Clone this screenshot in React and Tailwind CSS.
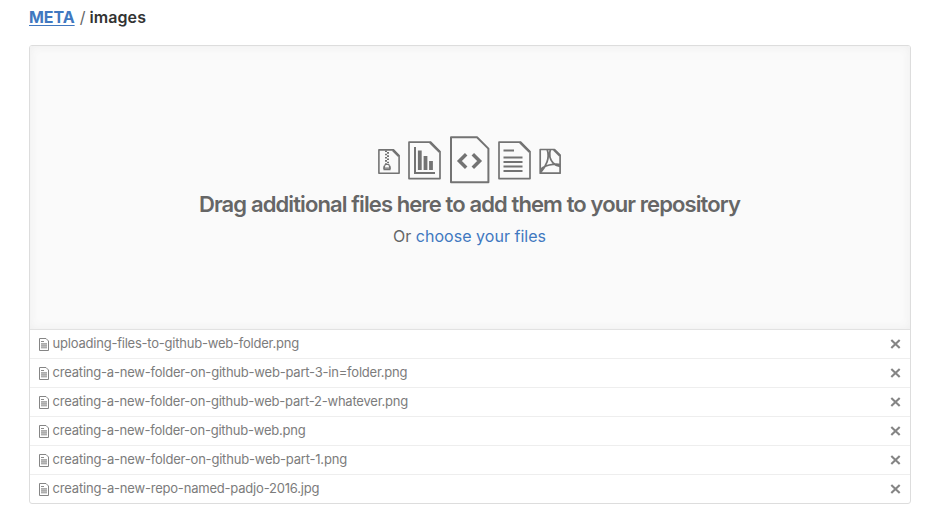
import React from 'react';

const files = [
  { name: 'uploading-files-to-github-web-folder.png', spacing: 'tracking-[-0.22px]' },
  { name: 'creating-a-new-folder-on-github-web-part-3-in=folder.png', spacing: 'tracking-[-0.21px]' },
  { name: 'creating-a-new-folder-on-github-web-part-2-whatever.png', spacing: 'tracking-[-0.22px]' },
  { name: 'creating-a-new-folder-on-github-web.png', spacing: 'tracking-[-0.23px]' },
  { name: 'creating-a-new-folder-on-github-web-part-1.png', spacing: 'tracking-[-0.2px]' },
  { name: 'creating-a-new-repo-named-padjo-2016.jpg', spacing: 'tracking-[-0.2px]' },
];

function ZipIcon() {
  return (
    <svg width="22" height="48" viewBox="0 0 22 48" fill="none" stroke="#737373" strokeWidth="1.6">
      <path d="M0.9 13.9H15.5L21.1 19.5V37.2H0.9Z" strokeLinejoin="round" />
      <path d="M14.8 14.2L20.8 20.2" strokeWidth="2" />
      <path d="M8 14.5v14" strokeWidth="2" strokeDasharray="1.6 1.6" />
      <path d="M10 16.1v12.4" strokeWidth="2" strokeDasharray="1.6 1.6" />
      <path d="M7.2 28.5h3.6l1.3 3.6H5.9Z" strokeWidth="1.2" />
      <path d="M6.1 29.8v3.8h5.8v-3.8" strokeWidth="1.3" />
    </svg>
  );
}

function ChartIcon() {
  return (
    <svg width="33" height="48" viewBox="0 0 33 48" fill="none" stroke="#737373" strokeWidth="1.7">
      <path d="M1 6.2H22.6L32 15.6V42.6H1Z" strokeLinejoin="round" />
      <path d="M22 6.4L31.6 16" strokeWidth="2.2" />
      <path d="M7 11V37H27" strokeWidth="2" />
      <path d="M11.8 14.5V34M17.5 20V34M23 25V34" strokeWidth="3.8" />
    </svg>
  );
}

function CodeIcon() {
  return (
    <svg width="40" height="48" viewBox="0 0 40 48" fill="none" stroke="#737373" strokeWidth="2">
      <path d="M1 1.2H27L38.4 12.6V46.2H1Z" strokeLinejoin="round" />
      <path d="M16.2 18.2L9.4 25L16.2 31.8M22.8 18.2L29.6 25L22.8 31.8" strokeWidth="3.5" />
    </svg>
  );
}

function TextIcon() {
  return (
    <svg width="33" height="48" viewBox="0 0 33 48" fill="none" stroke="#737373" strokeWidth="1.7">
      <path d="M1 6.2H22.6L32 15.6V42.6H1Z" strokeLinejoin="round" />
      <path d="M22 6.4L31.6 16" strokeWidth="2.2" />
      <path d="M5.5 14.5H16M5.5 21.5H24.5M5.5 26H24.5M5.5 30.5H24.5M5.5 35H24.5" strokeWidth="1.8" />
    </svg>
  );
}

function PdfIcon() {
  return (
    <svg width="22" height="48" viewBox="0 0 22 48" fill="none" stroke="#737373" strokeWidth="1.7">
      <path d="M1.2 13.5H15.5L21.1 19.1V37.2H1.2Z" strokeLinejoin="round" />
      <path d="M14.8 13.7L20.8 19.7" strokeWidth="2" />
      <path d="M8.3 13.8C9.6 18 9.5 22 8 26C6.3 30.5 4 34 1.5 36.5M11.3 13.8C9.8 19 11 23.5 14 26.8C16 29 18.5 30 21 30.3M1.5 33.3C5 30.2 9.5 28.8 14 28.3C17 28 19.5 28.1 21 28.6" strokeWidth="1.8" />
    </svg>
  );
}

function FileIcon() {
  return (
    <svg width="10" height="13" viewBox="0 0 10 13" fill="none">
      <path d="M0.5 0.5H7L9.5 3V12.5H0.5Z" stroke="#858585" />
      <path d="M2 3.5H5" stroke="#8c8c8c" />
      <path d="M2 5h6v5.5H2Z" fill="#bcbcbc" />
      <path d="M2 5.5H8M2 7.5H8M2 9.5H8" stroke="#a5a5a5" strokeWidth="0.7" />
    </svg>
  );
}

function FileRow({ name, spacing }) {
  return (
    <li className="flex h-[29px] items-center border-b border-[#eeeeee] pl-[9px] pr-[9px] last:h-[28px] last:border-b-0">
      <span className="mt-[1px] shrink-0"><FileIcon /></span>
      <span className={`-mt-[2px] ml-[3.6px] text-[13px] leading-[18px] text-[#7c7c7c] ${spacing}`}>{name}</span>
      <button type="button" aria-label="Remove" className="ml-auto">
        <svg width="11" height="10" viewBox="0 0 11 10" fill="none" stroke="#858585" strokeWidth="2.1" className="block">
          <path d="M1.3 0.9L9.7 9.1M9.7 0.9L1.3 9.1" />
        </svg>
      </button>
    </li>
  );
}

export default function App() {
  return (
    <main className="h-[521px] w-[926px] overflow-hidden bg-white pl-[29px] font-['Inter','Liberation_Sans',sans-serif]">
      <header className="flex h-[45px] items-start pt-[5px] text-[16px] leading-[24px] text-[#333333]">
        <a href="#" className="font-bold tracking-[-0.05px] text-[#4078c0] underline decoration-1 underline-offset-[2px]">META</a>
        <span className="ml-[5px] mr-[4px] text-[#666666]">/</span>
        <strong className="font-semibold tracking-[0.1px]">images</strong>
      </header>
      <section className="h-[459px] w-[882px] overflow-hidden rounded-[3px] border border-[#dddddd]">
        <div className="flex h-[284px] flex-col items-center border-b border-[#e2e2e2] bg-[#fafafa] pr-[1px] pt-[90px] shadow-[inset_0_0_10px_#eeeeee]">
          <div className="flex">
            <ZipIcon />
            <span className="ml-[8px]"><ChartIcon /></span>
            <span className="ml-[9px]"><CodeIcon /></span>
            <span className="ml-[8px]"><TextIcon /></span>
            <span className="ml-[8px]"><PdfIcon /></span>
          </div>
          <h1 className="mt-[6px] whitespace-nowrap text-[22px] font-semibold leading-[28px] tracking-[-0.89px] text-[#666666]">Drag additional files here to add them to your repository</h1>
          <p className="mt-[6px] whitespace-nowrap text-[16px] leading-[24px] tracking-[0.03px] text-[#666666]">
            Or <a href="#" className="text-[#4078c0]">choose your files</a>
          </p>
        </div>
        <ul>
          {files.map((file) => <FileRow key={file.name} {...file} />)}
        </ul>
      </section>
    </main>
  );
}
